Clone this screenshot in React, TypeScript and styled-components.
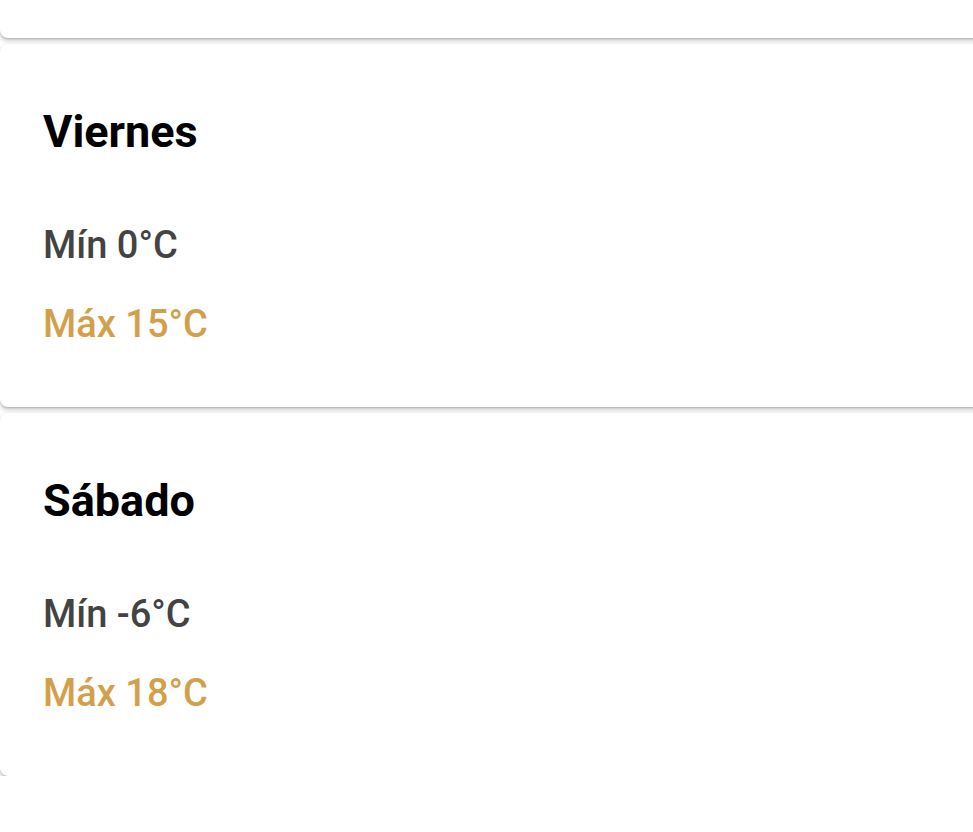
import * as React from 'react';
import styled, { createGlobalStyle } from 'styled-components';

const GlobalStyle = createGlobalStyle`
  html, body {
    margin: 0;
    padding: 0;
    background: #fff;
    overflow: hidden;
  }
  body {
    font-family: Roboto, "Noto Sans", sans-serif;
  }
`;

const List = styled.div`
  display: flex;
  flex-direction: column;
  gap: 6px;
  margin-top: -325px;
  width: calc(100% + 20px);
`;

const Card = styled.div`
  background: #fff;
  border-radius: 8px;
  box-shadow: 0 3px 5px rgba(0, 0, 0, 0.2), 0 1px 2px rgba(0, 0, 0, 0.16);
  height: 363px;
  box-sizing: border-box;
  padding: 61px 44px 0 43px;
  display: flex;
  flex-direction: column;
`;

const Day = styled.h2`
  margin: 0 0 63px 0;
  font-size: 45px;
  line-height: 54px;
  font-weight: 700;
  color: #000;
`;

const Temp = styled.div<{ $max?: boolean }>`
  font-size: 38px;
  line-height: 46px;
  font-weight: 500;
  color: ${p => (p.$max ? '#d39f4b' : '#434343')};
  margin-bottom: ${p => (p.$max ? '0' : '33px')};
`;

const days = [
  { name: 'Viernes', min: 0, max: 15 },
  { name: 'Sábado', min: -6, max: 18 },
];

export default function App() {
  return (
    <>
      <GlobalStyle />
      <List>
        <Card />
        {days.map(d => (
          <Card key={d.name}>
            <Day>{d.name}</Day>
            <Temp>Mín {d.min}°C</Temp>
            <Temp $max>Máx {d.max}°C</Temp>
          </Card>
        ))}
      </List>
    </>
  );
}
